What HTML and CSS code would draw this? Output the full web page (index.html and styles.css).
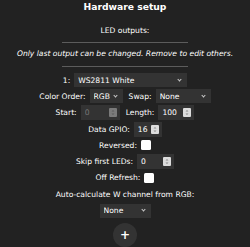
FILE: index.html
```html
<!DOCTYPE html>
<html lang="en">
<head>
<meta charset="utf-8">
<title>Hardware setup</title>
<link rel="stylesheet" href="styles.css">
</head>
<body>
<h3 class="title">Hardware setup</h3>
<div class="label">LED outputs:</div>
<hr class="rule rule-top">
<i class="note">Only last output can be changed. Remove to edit others.</i>
<hr class="rule rule-bottom">
<div class="rows">
  <div class="row">
    <span>1:</span>
    <span class="sel w-type"><select><option>WS2811 White</option></select></span>
  </div>
  <div class="row">
    <span>Color Order:</span>
    <span class="sel w-rgb"><select><option>RGB</option></select></span>
    <span class="lbl-gap">Swap:</span>
    <span class="sel w-swap"><select><option>None</option></select></span>
  </div>
  <div class="row">
    <span>Start:</span>
    <span class="num n-start is-disabled"><input type="number" value="0" disabled><svg class="spin" viewBox="0 0 8 9" width="8" height="9"><rect width="8" height="9" rx="1"/><path d="M2.5 3.6 4 2.1 5.5 3.6Z M2.5 5.4 4 6.9 5.5 5.4Z"/></svg></span>
    <span class="lbl-gap">Length:</span>
    <span class="num n-len"><input type="number" value="100"><svg class="spin" viewBox="0 0 8 9" width="8" height="9"><rect width="8" height="9" rx="1"/><path d="M2.5 3.6 4 2.1 5.5 3.6Z M2.5 5.4 4 6.9 5.5 5.4Z"/></svg></span>
  </div>
  <div class="row">
    <span>Data GPIO:</span>
    <span class="num n-gpio"><input type="number" value="16"><svg class="spin" viewBox="0 0 8 9" width="8" height="9"><rect width="8" height="9" rx="1"/><path d="M2.5 3.6 4 2.1 5.5 3.6Z M2.5 5.4 4 6.9 5.5 5.4Z"/></svg></span>
  </div>
  <div class="row">
    <span>Reversed:</span>
    <input class="chk" type="checkbox">
  </div>
  <div class="row">
    <span>Skip first LEDs:</span>
    <span class="num n-skip"><input type="number" value="0"><svg class="spin" viewBox="0 0 8 9" width="8" height="9"><rect width="8" height="9" rx="1"/><path d="M2.5 3.6 4 2.1 5.5 3.6Z M2.5 5.4 4 6.9 5.5 5.4Z"/></svg></span>
  </div>
  <div class="row">
    <span>Off Refresh:</span>
    <input class="chk" type="checkbox">
  </div>
  <div class="row">
    <span>Auto-calculate W channel from RGB:</span>
  </div>
  <div class="row">
    <span class="sel w-wcalc"><select><option>None</option></select></span>
  </div>
</div>
<button class="add" type="button">+</button>
</body>
</html>
```

FILE: styles.css
```css
html, body {
  margin: 0;
  padding: 0;
  background: #222;
}

body {
  font-family: "DejaVu Sans", Verdana, sans-serif;
  font-size: 7.6px;
  color: #fff;
  text-align: center;
}

.title {
  margin: 0;
  padding-top: 1px;
  font-size: 9.2px;
  font-weight: bold;
  line-height: 11px;
}

.label {
  margin-top: 14px;
  line-height: 10px;
}

.rule {
  width: 126px;
  height: 0;
  border: 0;
  border-top: 1px solid #5c5c5c;
  margin: 6px auto 0;
}

.note {
  display: block;
  margin-top: 6px;
  line-height: 10px;
  font-style: italic;
}

.rule-bottom {
  margin-top: 7px;
}

.rows {
  margin-top: 5px;
  display: flex;
  flex-direction: column;
}

.row {
  height: 16.3px;
  display: flex;
  align-items: center;
  justify-content: center;
  gap: 4px;
  white-space: nowrap;
}

.lbl-gap {
  margin-left: 2px;
}

/* selects */
.sel {
  display: inline-flex;
  align-items: center;
  height: 14px;
  background: #333;
  box-sizing: border-box;
}

.sel select {
  -webkit-appearance: none;
  appearance: none;
  flex: 1;
  min-width: 0;
  height: 100%;
  margin: 0;
  padding: 0 0 0 4px;
  border: 0;
  outline: none;
  background: transparent;
  color: #fff;
  font: inherit;
}

.sel::after {
  content: "";
  width: 2px;
  height: 2px;
  margin: 0 6px 2px 3px;
  border-right: 1px solid #ccc;
  border-bottom: 1px solid #ccc;
  transform: rotate(45deg);
}

.w-type { width: 113px; }
.w-rgb { width: 33px; }
.w-swap { width: 55px; }
.w-wcalc { width: 51px; }

/* number inputs */
.num {
  display: inline-flex;
  align-items: center;
  height: 15px;
  background: #333;
  box-sizing: border-box;
  padding-right: 3px;
}

.num input {
  -webkit-appearance: none;
  appearance: textfield;
  flex: 1;
  min-width: 0;
  height: 100%;
  margin: 0;
  padding: 0 0 0 4px;
  border: 0;
  outline: none;
  background: transparent;
  color: #fff;
  font: inherit;
}

.num input::-webkit-inner-spin-button,
.num input::-webkit-outer-spin-button {
  -webkit-appearance: none;
  margin: 0;
}

.spin {
  flex: none;
  display: block;
}

.spin rect { fill: #dcdcdc; }
.spin path { fill: #8a8a8a; }

.is-disabled input { color: #777; }
.is-disabled .spin rect { fill: #7a7a7a; }
.is-disabled .spin path { fill: #5a5a5a; }

.n-start { width: 39px; }
.n-len { width: 36px; }
.n-gpio { width: 28px; }
.n-skip { width: 37px; }

/* checkbox */
.chk {
  -webkit-appearance: none;
  appearance: none;
  width: 10px;
  height: 10px;
  margin: 0;
  border: 0;
  border-radius: 1.5px;
  background: #fff;
}

/* add button */
.add {
  display: block;
  width: 24px;
  height: 24px;
  margin: 4px auto 0;
  padding: 0;
  border: 0;
  border-radius: 50%;
  background: #333;
  color: #fff;
  font-family: "DejaVu Sans", Verdana, sans-serif;
  font-size: 12px;
  font-weight: bold;
  line-height: 24px;
}
```
